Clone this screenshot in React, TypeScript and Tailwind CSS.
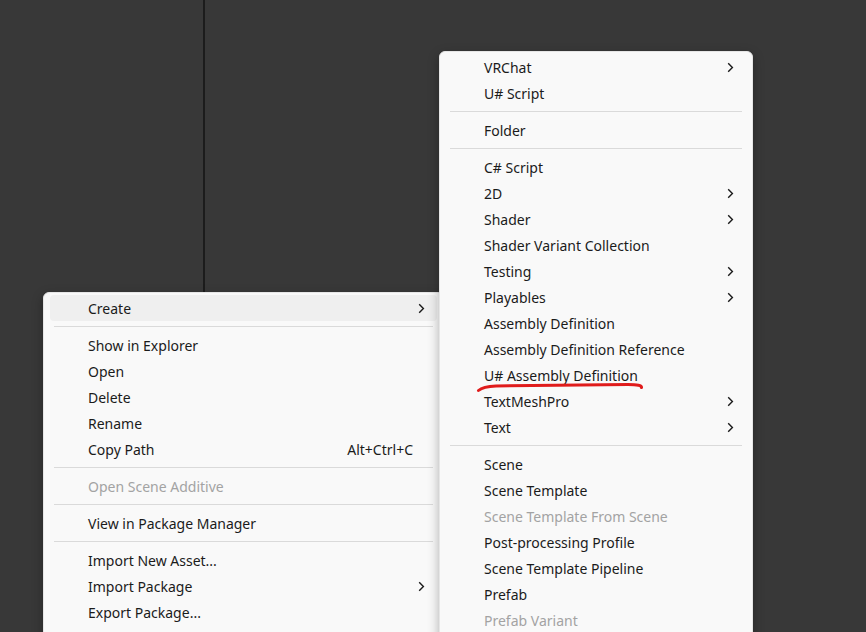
import React from "react";

type Item =
  | { type: "sep" }
  | { type: "item"; label: string; sub?: boolean; disabled?: boolean; shortcut?: string; active?: boolean };

const leftItems: Item[] = [
  { type: "item", label: "Create", sub: true, active: true },
  { type: "sep" },
  { type: "item", label: "Show in Explorer" },
  { type: "item", label: "Open" },
  { type: "item", label: "Delete" },
  { type: "item", label: "Rename" },
  { type: "item", label: "Copy Path", shortcut: "Alt+Ctrl+C" },
  { type: "sep" },
  { type: "item", label: "Open Scene Additive", disabled: true },
  { type: "sep" },
  { type: "item", label: "View in Package Manager" },
  { type: "sep" },
  { type: "item", label: "Import New Asset..." },
  { type: "item", label: "Import Package", sub: true },
  { type: "item", label: "Export Package..." },
];

const rightItems: Item[] = [
  { type: "item", label: "VRChat", sub: true },
  { type: "item", label: "U# Script" },
  { type: "sep" },
  { type: "item", label: "Folder" },
  { type: "sep" },
  { type: "item", label: "C# Script" },
  { type: "item", label: "2D", sub: true },
  { type: "item", label: "Shader", sub: true },
  { type: "item", label: "Shader Variant Collection" },
  { type: "item", label: "Testing", sub: true },
  { type: "item", label: "Playables", sub: true },
  { type: "item", label: "Assembly Definition" },
  { type: "item", label: "Assembly Definition Reference" },
  { type: "item", label: "U# Assembly Definition" },
  { type: "item", label: "TextMeshPro", sub: true },
  { type: "item", label: "Text", sub: true },
  { type: "sep" },
  { type: "item", label: "Scene" },
  { type: "item", label: "Scene Template" },
  { type: "item", label: "Scene Template From Scene", disabled: true },
  { type: "item", label: "Post-processing Profile" },
  { type: "item", label: "Scene Template Pipeline" },
  { type: "item", label: "Prefab" },
  { type: "item", label: "Prefab Variant", disabled: true },
];

function Chevron() {
  return (
    <svg width="7" height="11" viewBox="0 0 7 11" className="absolute right-[12px] top-[8px]">
      <path d="M1.2 1.2 L5.4 5.5 L1.2 9.8" fill="none" stroke="#1b1b1b" strokeWidth="1.4" />
    </svg>
  );
}

function Menu({ items }: { items: Item[] }) {
  return (
    <div className="flex flex-col px-[6px] pt-[2px]">
      {items.map((it, i) =>
        it.type === "sep" ? (
          <div key={i} className="py-[5px] px-[4px]">
            <div className="h-px bg-[#dadada]" />
          </div>
        ) : (
          <div
            key={i}
            className={`relative h-[26px] flex items-center pl-[38px] pr-[24px] rounded-[4px] text-[14px] ${
              it.active ? "bg-[#efefef]" : ""
            } ${it.disabled ? "text-[#a3a3a3]" : "text-[#1b1b1b]"}`}
          >
            <span className="flex-1 whitespace-nowrap">{it.label}</span>
            {it.shortcut && <span className="whitespace-nowrap">{it.shortcut}</span>}
            {it.sub && <Chevron />}
          </div>
        )
      )}
    </div>
  );
}

export default function App() {
  return (
    <div
      className="relative w-[866px] h-[632px] bg-[#383838] overflow-hidden"
      style={{ fontFamily: '"Noto Sans", "Open Sans", sans-serif' }}
    >
      <div className="absolute left-[203px] top-0 w-[2px] h-[292px] bg-[#1c1c1c]" />
      <div className="absolute left-[43px] top-[292px] w-[401px] h-[360px] bg-[#f9f9f9] rounded-[6px] border border-[#e6e6e6] shadow-[0_4px_12px_rgba(0,0,0,0.3)]">
        <Menu items={leftItems} />
      </div>
      <div className="absolute left-[439px] top-[51px] w-[314px] h-[600px] bg-[#f9f9f9] rounded-[6px] border border-[#e6e6e6] shadow-[0_4px_12px_rgba(0,0,0,0.3)]">
        <Menu items={rightItems} />
      </div>
      <svg className="absolute left-0 top-0 pointer-events-none" width="866" height="632">
        <path
          d="M478.5 390.5 Q483 386.5 496 386 L628 384.5 Q642 384.5 641.5 387.5"
          fill="none"
          stroke="#e01c1c"
          strokeWidth="3"
          strokeLinecap="round"
        />
      </svg>
    </div>
  );
}
